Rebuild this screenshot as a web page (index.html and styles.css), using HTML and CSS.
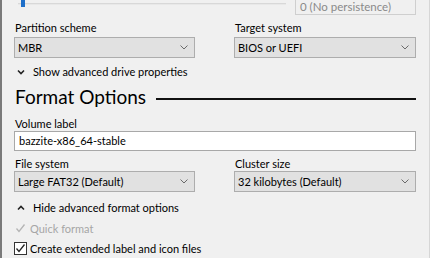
FILE: index.html
```html
<!doctype html>
<html>
<head>
<link rel="stylesheet" href="styles.css">
</head>
<body>
<div class="win">
	<div class="toprow">
		<div class="slider"><span class="thumb"></span><span class="track"></span></div>
		<div class="persist">0 (No persistence)</div>
	</div>

	<div class="cols">
		<div class="field">
			<div class="lbl">Partition scheme</div>
			<div class="combo">MBR<svg class="dd" viewBox="0 0 8 5"><path d="M0.5 0.5L4 4L7.5 0.5"/></svg></div>
		</div>
		<div class="field">
			<div class="lbl">Target system</div>
			<div class="combo">BIOS or UEFI<svg class="dd" viewBox="0 0 8 5"><path d="M0.5 0.5L4 4L7.5 0.5"/></svg></div>
		</div>
	</div>

	<div class="toggle"><svg class="chev" viewBox="0 0 8 6"><path d="M1 1.5L4 4.5L7 1.5"/></svg>Show advanced drive properties</div>

	<div class="section"><h2>Format Options</h2><span class="rule"></span></div>

	<div class="lbl">Volume label</div>
	<div class="textbox">bazzite-x86_64-stable</div>

	<div class="cols">
		<div class="field">
			<div class="lbl">File system</div>
			<div class="combo">Large FAT32 (Default)<svg class="dd" viewBox="0 0 8 5"><path d="M0.5 0.5L4 4L7.5 0.5"/></svg></div>
		</div>
		<div class="field">
			<div class="lbl">Cluster size</div>
			<div class="combo">32 kilobytes (Default)<svg class="dd" viewBox="0 0 8 5"><path d="M0.5 0.5L4 4L7.5 0.5"/></svg></div>
		</div>
	</div>

	<div class="toggle hide"><svg class="chev" viewBox="0 0 8 6"><path d="M1 4.5L4 1.5L7 4.5"/></svg>Hide advanced format options</div>

	<div class="check off"><svg class="box" viewBox="0 0 13 13"><rect x="0.5" y="0.5" width="12" height="12"/><path d="M2.5 6.5L5 9.5L10.5 2.5"/></svg>Quick format</div>
	<div class="check"><svg class="box" viewBox="0 0 13 13"><rect x="0.5" y="0.5" width="12" height="12"/><path d="M2.5 6.5L5 9.5L10.5 2.5"/></svg>Create extended label and icon files</div>
</div>
</body>
</html>
```

FILE: styles.css
```css
* {margin:0; padding:0; box-sizing:border-box;}
html, body {width:430px; height:258px; overflow:hidden; background:#f0f0f0;}
body {font-family:Lato, "Noto Sans", sans-serif; font-size:11px; color:#000;}
.win {height:258px; border-left:2px solid #7a7a7a; border-right:1px solid #d6d6d6; padding:0 13px 0 12px; overflow:hidden;}

.toprow {display:flex; justify-content:space-between; align-items:flex-start; height:16px;}
.slider {position:relative; width:268px; height:16px; margin-left:4px;}
.slider .track {position:absolute; left:0; right:0; top:3px; height:2px; background:#d8d8d8; border-bottom:1px solid #e8e8e8;}
.slider .thumb {position:absolute; left:3px; top:0; width:4px; height:7px; background:#1e6fc9; z-index:1;}
.persist {width:121px; height:15px; border:1px solid #cfcfcf; border-top:0; background:#f0f0f0; color:#8a8a8a; padding:0 0 0 4px; line-height:13px; font-size:11.5px;}

.cols {display:grid; grid-template-columns:181px 182px; column-gap:39px;}
.lbl {height:15px; line-height:15px; margin-top:4px; padding-left:1px;}
.combo {position:relative; height:21px; margin-top:2px; border:1px solid #adadad; background:#e1e1e1; line-height:19px; padding-left:3px;}
.dd {position:absolute; right:6px; top:7px; width:8px; height:5px; fill:none; stroke:#6a6a6a; stroke-width:1;}

.toggle {height:16px; line-height:16px; margin-top:6px; padding-left:3px; display:flex; align-items:center;}
.chev {width:8px; height:6px; margin-right:8px; fill:none; stroke:#222; stroke-width:1.6;}

.section {display:flex; align-items:center; margin-top:5px; height:24px;}
.section h2 {font-weight:normal; font-size:19px; line-height:24px; padding-left:1px; margin-right:10px;}
.section .rule {flex:1; height:2px; background:#111; margin-top:3px;}

.section + .lbl {margin-top:7px;}
.textbox {height:20px; margin-top:0; border:1px solid #a8a8a8; background:#fff; line-height:18px; padding-left:4px;}

.textbox + .cols .lbl {margin-top:5px;}
.textbox + .cols .combo {margin-top:0;}

.toggle.hide {margin-top:8px;}

.check {display:flex; align-items:center; height:17px; line-height:17px; margin-top:3px;}
.check.off {margin-top:4px;}
.check .box {width:13px; height:13px; margin-right:3px;}
.check .box rect {fill:#fff; stroke:#333; stroke-width:1;}
.check .box path {fill:none; stroke:#222; stroke-width:1.3;}
.check.off {color:#a6a6a6;}
.check.off .box rect {fill:#f0f0f0; stroke:#f0f0f0;}
.check.off .box path {stroke:#b4b4b4;}
```
